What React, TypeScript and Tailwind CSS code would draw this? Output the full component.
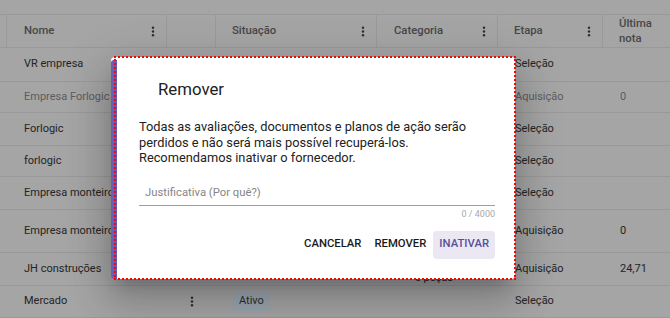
import React from "react";

const Kebab = ({ className = "" }: { className?: string }) => (
  <svg width="4" height="11" viewBox="0 0 4 11" className={className}>
    <circle cx="2" cy="1.8" r="1.2" fill="#2e2e2e" />
    <circle cx="2" cy="5.5" r="1.2" fill="#2e2e2e" />
    <circle cx="2" cy="9.2" r="1.2" fill="#2e2e2e" />
  </svg>
);

type Row = { nome: string; etapa: string; nota: string; h: number; dim?: boolean; extra?: boolean; last?: boolean };

const rows: Row[] = [
  { nome: "VR empresa", etapa: "Seleção", nota: "", h: 34 },
  { nome: "Empresa Forlogic", etapa: "Aquisição", nota: "0", h: 31, dim: true },
  { nome: "Forlogic", etapa: "Seleção", nota: "", h: 33 },
  { nome: "forlogic", etapa: "Seleção", nota: "", h: 31 },
  { nome: "Empresa monteiro", etapa: "Seleção", nota: "", h: 33 },
  { nome: "Empresa monteiro", etapa: "Aquisição", nota: "0", h: 43 },
  { nome: "JH construções", etapa: "Aquisição", nota: "24,71", h: 33, extra: true },
  { nome: "Mercado", etapa: "Seleção", nota: "", h: 32, last: true },
];

export default function App() {
  return (
    <div
      className="relative w-[670px] h-[318px] overflow-hidden bg-[#a5a5a5]"
      style={{ fontFamily: "Roboto, 'Noto Sans', sans-serif" }}
    >
      <div className="h-[15px] border-b border-[#999999]" />
      {/* header */}
      <div className="flex h-[33px] border-b border-[#999999] text-[11.3px] font-medium text-[#474747]">
        <div className="w-[7px] border-r border-[#999999]" />
        <div className="w-[160px] border-r border-[#999999] flex items-center justify-between pl-[17px] pr-[11px]">
          <span>Nome</span>
          <Kebab />
        </div>
        <div className="w-[49px] border-r border-[#999999]" />
        <div className="w-[161px] border-r border-[#999999] flex items-center justify-between pl-[16px] pr-[11px]">
          <span>Situação</span>
          <Kebab />
        </div>
        <div className="w-[121px] border-r border-[#999999] flex items-center justify-between pl-[17px] pr-[11px]">
          <span>Categoria</span>
          <Kebab />
        </div>
        <div className="w-[105px] border-r border-[#999999] flex items-center justify-between pl-[16px] pr-[11px]">
          <span>Etapa</span>
          <Kebab />
        </div>
        <div className="flex-1 flex items-center pl-[16px] leading-[15px]">
          <span>
            Última
            <br />
            nota
          </span>
        </div>
      </div>
      {/* rows */}
      {rows.map((r, i) => (
        <div
          key={i}
          className={`flex items-center border-b border-[#999999] text-[11px] ${r.dim ? "text-[#5c5c5c]" : "text-[#242424]"}`}
          style={{ height: r.h }}
        >
          <div className="w-[7px]" />
          <div className="w-[160px] pl-[17px]">{r.nome}</div>
          <div className="w-[49px] flex justify-center">{r.last ? <Kebab /> : null}</div>
          <div className="w-[161px] pl-[17px]">
            {r.last ? (
              <span className="inline-block rounded-[3px] bg-[#9ba6b0] px-[6px] py-[1px] text-[#2c2c2c]">Ativo</span>
            ) : null}
          </div>
          <div className="w-[121px] pl-[38px] self-end leading-[12px] pb-[1px]">
            {r.extra ? "e peças" : null}
          </div>
          <div className="w-[105px] pl-[17px]">{r.etapa}</div>
          <div className="flex-1 pl-[17px]">{r.nota}</div>
        </div>
      ))}

      {/* dialog */}
      <div className="absolute left-[111px] top-[57px] w-[404px] h-[222px] flex rounded-[4px] bg-white shadow-[0_11px_15px_-7px_rgba(0,0,0,0.2),0_24px_38px_3px_rgba(0,0,0,0.14),0_9px_46px_8px_rgba(0,0,0,0.12)]">
        <div className="w-[6px] mt-[3px] rounded-l-[3px] bg-[#6a5db3]" />
        <div className="flex-1 flex flex-col pl-[22px] pr-[20px] text-[#212121]">
          <div className="pt-[22px] pl-[19px] text-[16.8px] leading-[20px] text-[#222]">Remover</div>
          <div className="mt-[20px] text-[12.8px] leading-[15.5px] text-[#222] whitespace-nowrap">
            Todas as avaliações, documentos e planos de ação serão
            <br />
            perdidos e não será mais possível recuperá-los.
            <br />
            Recomendamos inativar o fornecedor.
          </div>
          <div className="mt-[14px] h-[26px] border-b border-[#9e9e9e] pt-[6px] pl-[6px] text-[11.3px] leading-[14px] text-[#858585]">
            Justificativa (Por quê?)
          </div>
          <div className="mt-[3px] text-right text-[9px] leading-[10px] text-[#a8a8a8]">0 / 4000</div>
          <div className="mt-[12px] flex justify-end items-center gap-[1px] text-[11.3px] font-medium">
            <div className="px-[6px] h-[28px] flex items-center text-[#1a1a1a]">CANCELAR</div>
            <div className="px-[6px] h-[28px] flex items-center text-[#1a1a1a]">REMOVER</div>
            <div className="px-[6px] h-[28px] flex items-center rounded-[4px] bg-[#ebe8f4] text-[#5a4f9c]">INATIVAR</div>
          </div>
        </div>
      </div>
      {/* dotted outline */}
      <div className="absolute left-[114px] top-[56px] w-[402px] h-[224px] border-2 border-dotted border-[#ff0000] pointer-events-none" />
    </div>
  );
}
